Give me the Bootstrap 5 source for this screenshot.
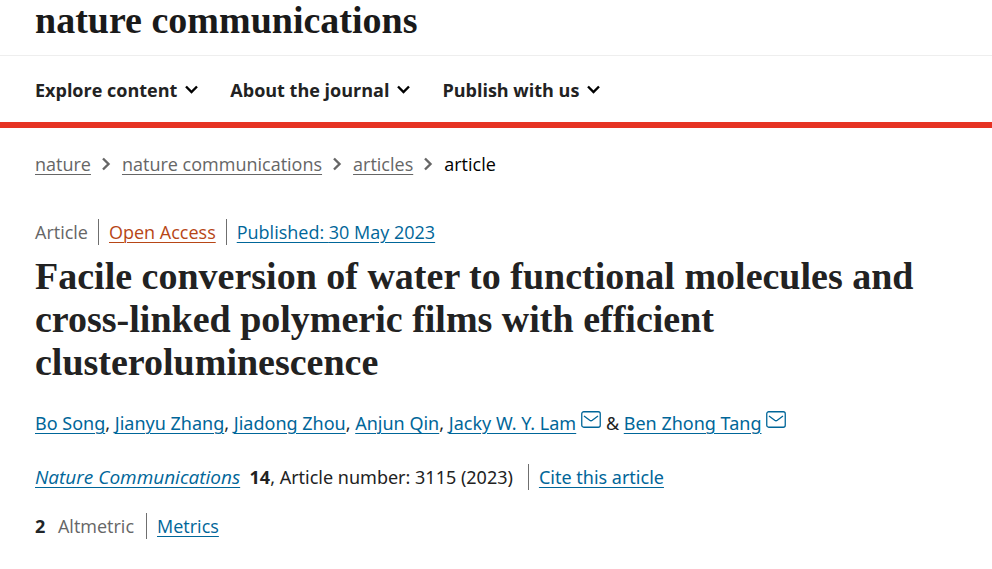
<!DOCTYPE html>
<html lang="en">
<head>
<meta charset="utf-8">
<meta name="viewport" content="width=device-width, initial-scale=1">
<title>Facile conversion of water to functional molecules | Nature Communications</title>
<link href="https://cdn.jsdelivr.net/npm/bootstrap@5.3.0/dist/css/bootstrap.min.css" rel="stylesheet">
<style>
  body { font-family: "Open Sans", "Noto Sans", sans-serif; font-size: 18px; line-height: 26px; color: #222; background: #fff; }
  .page-inset { padding-left: 35px; padding-right: 35px; }
  .masthead { height: 56px; border-bottom: 1px solid #eee; }
  .brand-name { font: 700 38px/40px "Liberation Serif", serif; color: #1a1a1a; text-decoration: none; }
  .journal-menu { height: 72px; padding-top: 2px; border-bottom: 6px solid #e63323; }
  .menu-button { padding: 0; border: 0; background: none; color: #222; font-weight: 700; font-size: 18px; }
  .menu-button svg { margin-top: -2px; }
  .menu-list { gap: 32px; }
  .trail { margin-top: 23px; color: #666; }
  .trail a { color: #666; }
  .trail .here { color: #000; }
  article a { color: #006699; }
  article a, .trail a { text-decoration-thickness: 1px; text-underline-offset: 3px; }
  .kind-line { margin-top: 42px; }
  .kind-line .access { color: #b74616; }
  .quiet { color: #666; }
  .divided { border-left: 1px solid #6f6f6f; padding-left: 10px; margin-left: 10px; }
  .paper-title { margin: 10px 0 0; font: 700 38px/43px "Liberation Serif", serif; color: #222; }
  .authors, .citation { font-family: "Noto Sans", "Open Sans", sans-serif; }
  .authors { margin-top: 26px; }
  .authors svg { margin-left: 5px; margin-top: -12px; }
  .citation { margin-top: 28px; }
  .citation i { font-family: "Open Sans", sans-serif; font-size: 19px; }
  .citation .divided { margin-left: 15px; }
  .metrics { margin-top: 23px; }
  .metrics .divided { margin-left: 12px; }
</style>
</head>
<body>
<header>
  <div class="masthead page-inset"><a class="brand-name" href="#">nature communications</a></div>
  <nav class="journal-menu page-inset d-flex align-items-center" aria-label="Journal">
    <ul class="menu-list list-unstyled d-flex flex-wrap mb-0">
      <li><button class="menu-button d-flex align-items-center gap-2" type="button">Explore content <svg width="13" height="9" viewBox="0 0 13 9" aria-hidden="true"><path d="M1 1.5 6.5 7 12 1.5" fill="none" stroke="#000" stroke-width="2.4"/></svg></button></li>
      <li><button class="menu-button d-flex align-items-center gap-2" type="button">About the journal <svg width="13" height="9" viewBox="0 0 13 9" aria-hidden="true"><path d="M1 1.5 6.5 7 12 1.5" fill="none" stroke="#000" stroke-width="2.4"/></svg></button></li>
      <li><button class="menu-button d-flex align-items-center gap-2" type="button">Publish with us <svg width="13" height="9" viewBox="0 0 13 9" aria-hidden="true"><path d="M1 1.5 6.5 7 12 1.5" fill="none" stroke="#000" stroke-width="2.4"/></svg></button></li>
    </ul>
  </nav>
</header>
<main class="page-inset">
  <nav aria-label="Breadcrumb">
    <ol class="trail list-unstyled d-flex flex-wrap align-items-center mb-0">
      <li><a href="#">nature</a></li>
      <li class="d-flex align-items-center"><svg class="mx-2" width="15" height="14" viewBox="0 0 15 14" aria-hidden="true"><path d="M4 1.5 9.5 7 4 12.5" fill="none" stroke="#666" stroke-width="2.4"/></svg><a href="#">nature communications</a></li>
      <li class="d-flex align-items-center"><svg class="mx-2" width="15" height="14" viewBox="0 0 15 14" aria-hidden="true"><path d="M4 1.5 9.5 7 4 12.5" fill="none" stroke="#666" stroke-width="2.4"/></svg><a href="#">articles</a></li>
      <li class="d-flex align-items-center"><svg class="mx-2" width="15" height="14" viewBox="0 0 15 14" aria-hidden="true"><path d="M4 1.5 9.5 7 4 12.5" fill="none" stroke="#666" stroke-width="2.4"/></svg><span class="here">article</span></li>
    </ol>
  </nav>
  <article>
    <ul class="kind-line list-unstyled d-flex flex-wrap mb-0">
      <li class="quiet">Article</li>
      <li class="divided"><a class="access" href="#">Open Access</a></li>
      <li class="divided"><a href="#">Published: <time datetime="2023-05-30">30 May 2023</time></a></li>
    </ul>
    <h1 class="paper-title">Facile conversion of water to functional molecules and cross-linked polymeric films with efficient clusteroluminescence</h1>
    <p class="authors mb-0"><a href="#">Bo Song</a>, <a href="#">Jianyu Zhang</a>, <a href="#">Jiadong Zhou</a>, <a href="#">Anjun Qin</a>, <a href="#">Jacky W. Y. Lam</a><a href="#" aria-label="Email Jacky W. Y. Lam"><svg width="20" height="17" viewBox="0 0 20 17" fill="none" stroke="#006699"><rect x=".75" y=".75" width="18.5" height="15.5" rx="2" stroke-width="1.3"/><path d="M3 5 8.7 9.3Q10 10.2 11.3 9.3L17 5" stroke-width="1.3"/></svg></a> &amp; <a href="#">Ben Zhong Tang</a><a href="#" aria-label="Email Ben Zhong Tang"><svg width="20" height="17" viewBox="0 0 20 17" fill="none" stroke="#006699"><rect x=".75" y=".75" width="18.5" height="15.5" rx="2" stroke-width="1.3"/><path d="M3 5 8.7 9.3Q10 10.2 11.3 9.3L17 5" stroke-width="1.3"/></svg></a></p>
    <div class="citation d-flex flex-wrap">
      <span><a href="#"><i>Nature Communications</i></a>&nbsp; <b>14</b>, Article number: 3115 (2023)</span>
      <span class="divided"><a href="#">Cite this article</a></span>
    </div>
    <ul class="metrics list-unstyled d-flex flex-wrap mb-0">
      <li class="quiet"><b class="text-dark me-2">2</b> Altmetric</li>
      <li class="divided"><a href="#">Metrics</a></li>
    </ul>
  </article>
</main>
<script src="https://cdn.jsdelivr.net/npm/bootstrap@5.3.0/dist/js/bootstrap.bundle.min.js"></script>
</body>
</html>
